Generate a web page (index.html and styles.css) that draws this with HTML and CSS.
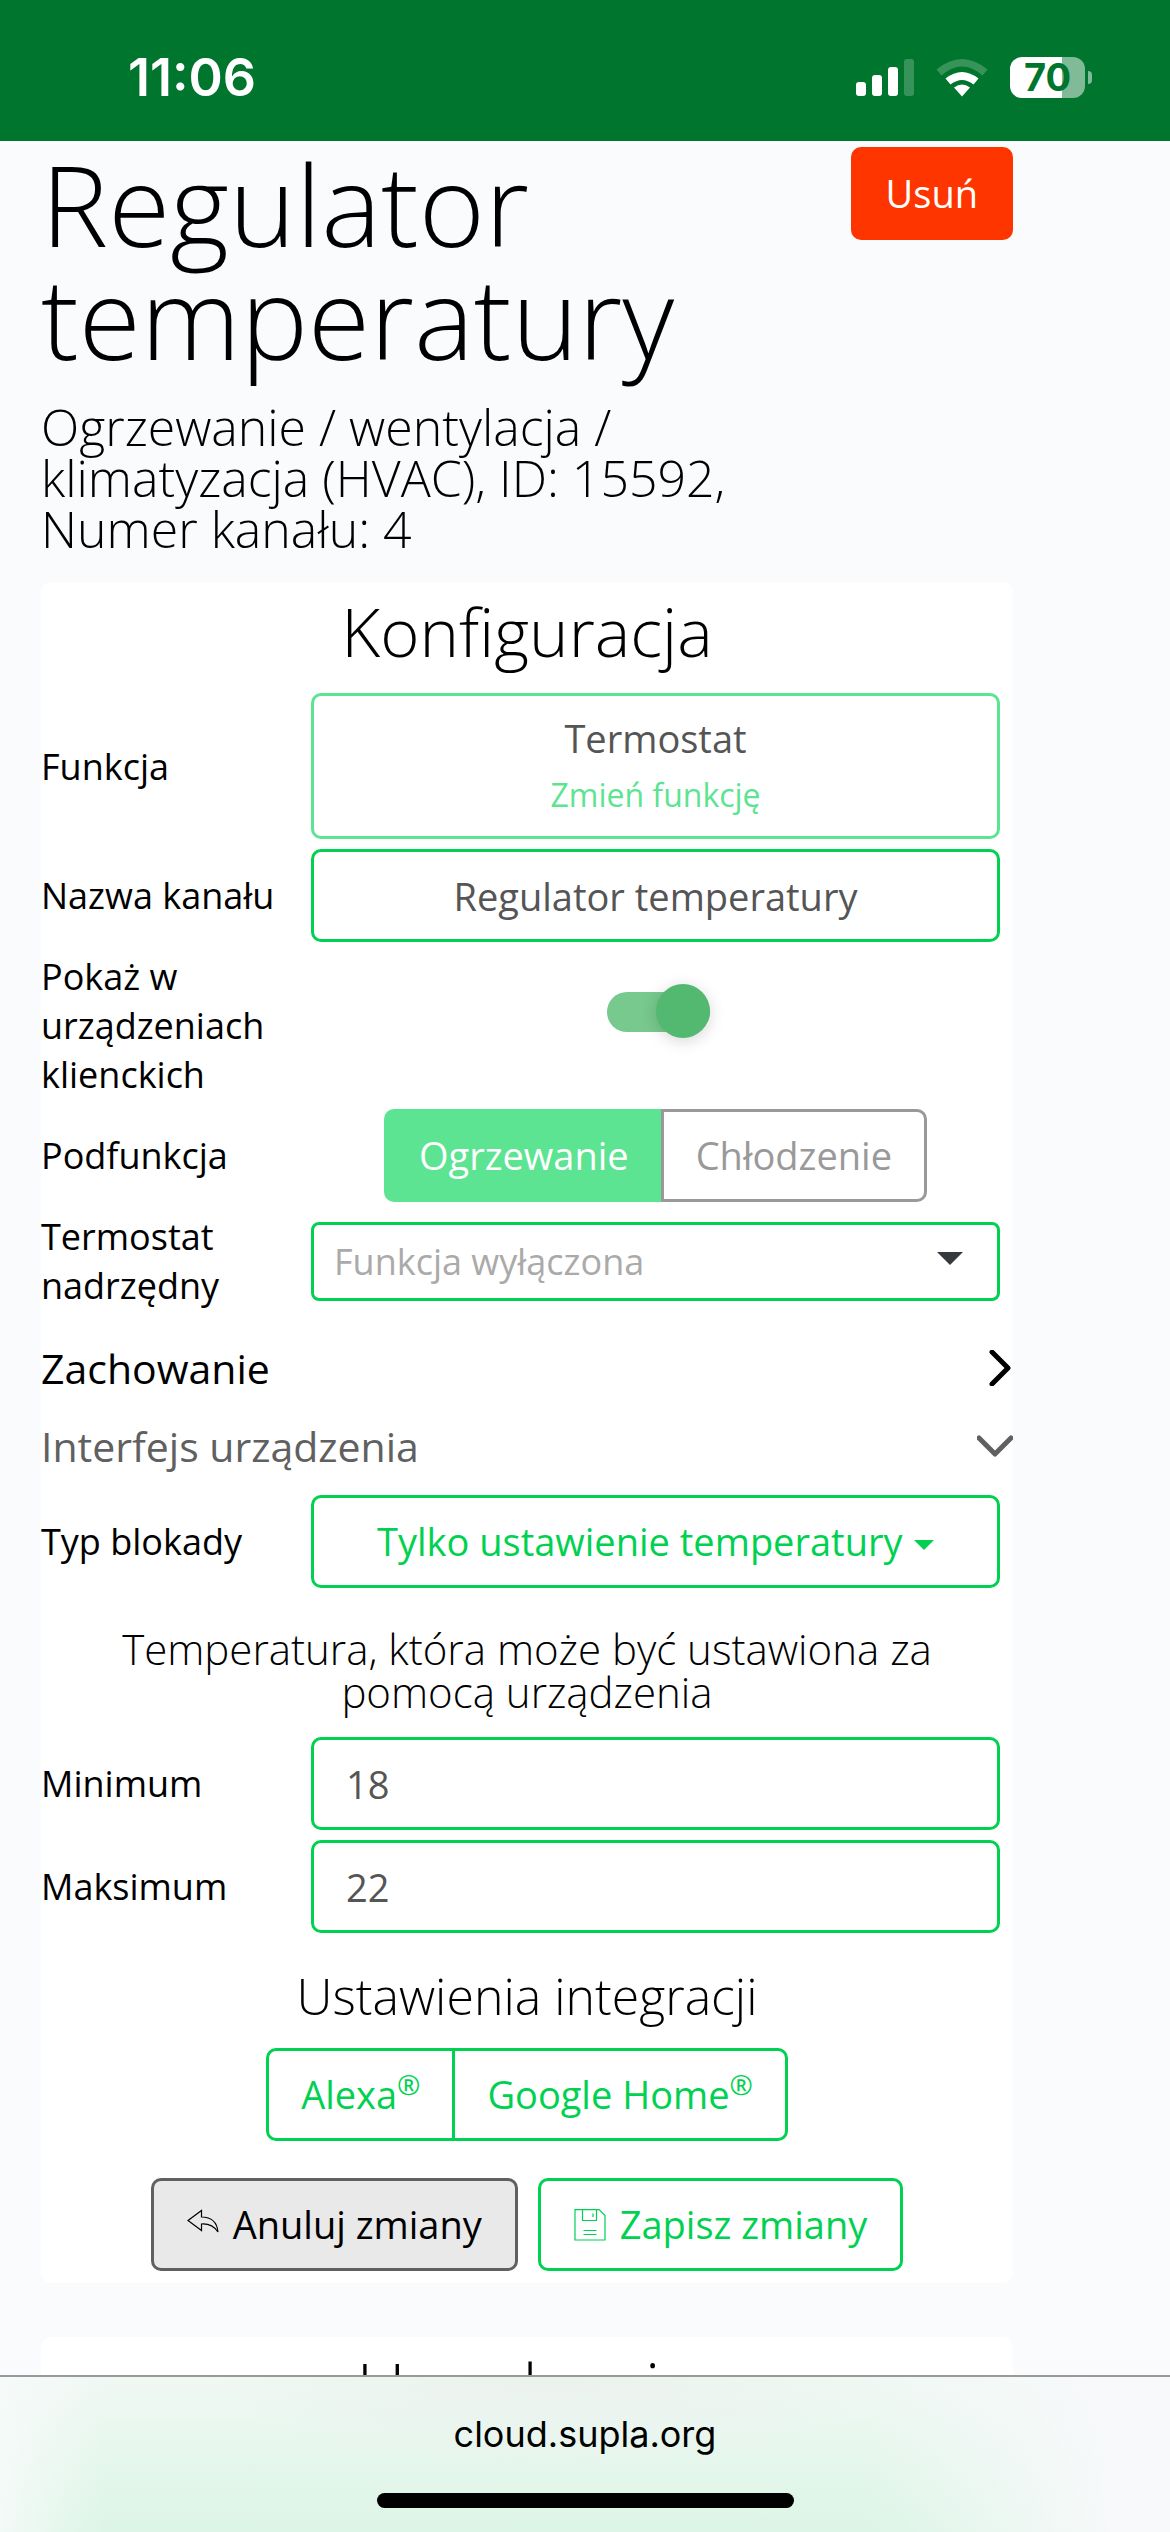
FILE: index.html
```html
<!DOCTYPE html>
<html lang="pl">
<head>
<meta charset="utf-8">
<meta name="viewport" content="width=device-width">
<title>Regulator temperatury</title>
<link rel="stylesheet" href="styles.css">
</head>
<body>
<div class="status-bar">
  <span class="clock">11:06</span>
  <div class="indicators">
    <svg class="signal" viewBox="0 0 58 38" aria-hidden="true">
      <rect x="0" y="23" width="10" height="14" rx="3" fill="#fff"/>
      <rect x="16" y="16" width="10" height="21" rx="3" fill="#fff"/>
      <rect x="32" y="8" width="10" height="29" rx="3" fill="#fff"/>
      <rect x="48" y="0" width="10" height="37" rx="3" fill="#fff" fill-opacity=".22"/>
    </svg>
    <svg class="wifi" viewBox="0 0 52 38" aria-hidden="true">
      <path d="M0.500 10.500Q26 -10.500 51.500 10.500L46.500 16.500Q26 -1.500 5.500 16.500Z" fill="#fff" fill-opacity=".22"/>
      <path d="M9.500 19.500Q26 6.500 42.500 19.500L37.500 25.500Q26 16.500 14.500 25.500Z" fill="#fff"/>
      <path d="M18 28.500Q26 22.500 34 28.500L26 37.500Z" fill="#fff"/>
    </svg>
    <div class="battery"><span class="battery-level">70</span><i class="battery-tip"></i></div>
  </div>
</div>

<main class="page">
  <header class="page-header">
    <div>
      <h1>Regulator<br>temperatury</h1>
      <p class="subtitle">Ogrzewanie / wentylacja /<br>klimatyzacja (HVAC), ID: 15592,<br>Numer kanału: 4</p>
    </div>
    <button class="btn btn-danger" type="button">Usuń</button>
  </header>

  <form class="card">
    <h2>Konfiguracja</h2>
    <div class="rows">
      <div class="row">
        <label for="function">Funkcja</label>
        <button id="function" class="function-btn" type="button">
          <span class="function-name">Termostat</span>
          <span class="function-change">Zmień funkcję</span>
        </button>
      </div>
      <div class="row">
        <label for="name">Nazwa kanału</label>
        <input id="name" class="control centered" type="text" value="Regulator temperatury">
      </div>
      <div class="row">
        <label for="visible">Pokaż w urządzeniach klienckich</label>
        <input id="visible" class="toggle" type="checkbox" role="switch" checked>
      </div>
      <div class="row">
        <span class="row-label" id="subfunction">Podfunkcja</span>
        <div class="btn-group" role="group" aria-labelledby="subfunction">
          <button class="btn btn-active" type="button">Ogrzewanie</button>
          <button class="btn btn-muted" type="button">Chłodzenie</button>
        </div>
      </div>
      <div class="row">
        <label for="master">Termostat nadrzędny</label>
        <div class="picker">
          <select id="master"><option>Funkcja wyłączona</option></select>
          <svg class="picker-arrow" viewBox="0 0 26 13" aria-hidden="true"><path d="M0 0H26L13 13Z" fill="#343a40"/></svg>
        </div>
      </div>
    </div>

    <div class="sections">
      <button class="section" type="button">Zachowanie
        <svg class="chevron" viewBox="0 0 36 36" aria-hidden="true"><path d="M15 2L31 18L15 34" fill="none" stroke="#000" stroke-width="5" stroke-linecap="round" stroke-linejoin="round"/></svg>
      </button>
      <button class="section section-open" type="button">Interfejs urządzenia
        <svg class="chevron" viewBox="0 0 36 36" aria-hidden="true"><path d="M2 10L18 26L34 10" fill="none" stroke="#606060" stroke-width="5" stroke-linecap="round" stroke-linejoin="round"/></svg>
      </button>
    </div>

    <div class="rows">
      <div class="row">
        <label for="lock">Typ blokady</label>
        <div class="control dropdown">
          <select id="lock"><option>Tylko ustawienie temperatury</option></select>
          <svg class="caret" viewBox="0 0 20 10" aria-hidden="true"><path d="M0 0H20L10 10Z" fill="#00d151"/></svg>
        </div>
      </div>
    </div>

    <h4>Temperatura, która może być ustawiona za pomocą urządzenia</h4>
    <div class="rows">
      <div class="row">
        <label for="min">Minimum</label>
        <input id="min" class="control" type="text" inputmode="numeric" value="18">
      </div>
      <div class="row">
        <label for="max">Maksimum</label>
        <input id="max" class="control" type="text" inputmode="numeric" value="22">
      </div>
    </div>

    <h3>Ustawienia integracji</h3>
    <div class="btn-group">
      <button class="btn btn-outline" type="button"><span>Alexa<sup>®</sup></span></button>
      <button class="btn btn-outline" type="button"><span>Google Home<sup>®</sup></span></button>
    </div>

    <div class="actions">
      <button class="btn btn-cancel" type="button">
        <svg class="icon" viewBox="0 0 32 32" aria-hidden="true"><path d="M1 11.500L14.500 1.500V8C24 8 30 13 31 23C27 17 22 14.500 14.500 15V21.500Z" fill="none" stroke="#000" stroke-width="1.200"/></svg>
        Anuluj zmiany
      </button>
      <button class="btn btn-outline" type="submit">
        <svg class="icon" viewBox="0 0 32 32" aria-hidden="true"><path d="M1 .6H25L31 6.600V31H1ZM8.500 .6V11.500H22.500V.6M19 4.500V8M9.500 21.500H22.500M9.500 25.500H22.500" fill="none" stroke="#00d151" stroke-width="1.200"/></svg>
        Zapisz zmiany
      </button>
    </div>
  </form>

  <section class="card">
    <h2>Urządzenie</h2>
  </section>
</main>

<footer class="browser-bar">
  <span>cloud.supla.org</span>
  <i class="home-indicator"></i>
</footer>
</body>
</html>
```
FILE: styles.css
```css
* { box-sizing: border-box; }

body {
  margin: 0;
  height: 100vh;
  display: flex;
  flex-direction: column;
  overflow: hidden;
  background: #fafbfd;
  color: #000;
  font-family: "Open Sans", sans-serif;
  font-size: 36px;
  line-height: 49px;
}

button, input, select { font: inherit; color: inherit; margin: 0; }

h1, h2, h3, h4, .subtitle {
  margin: 0;
  font-family: "Open Sans", sans-serif;
  font-weight: 300;
}

/* status bar */
.status-bar {
  flex: none;
  display: flex;
  justify-content: space-between;
  align-items: center;
  height: 141px;
  padding: 14px 78px 0 128px;
  background: #00752e;
  color: #fff;
}
.clock { font: 600 52px/60px Inter, sans-serif; }
.indicators { display: flex; align-items: center; gap: 22px; }
.signal { width: 58px; height: 38px; }
.wifi { width: 52px; height: 38px; }
.battery { display: flex; align-items: center; gap: 3px; }
.battery-level {
  width: 75px;
  height: 41px;
  border-radius: 12px;
  background: linear-gradient(90deg, #fff 70%, #80ba96 70%);
  color: #00752e;
  font: 700 38px/41px Inter, sans-serif;
  text-align: center;
}
.battery-tip { width: 4px; height: 13px; border-radius: 0 6px 6px 0; background: #80ba96; }

/* page */
.page {
  flex: 1;
  min-height: 0;
  overflow: hidden;
  padding: 6px 157px 0 41px;
}
.page-header { display: flex; justify-content: space-between; align-items: flex-start; margin-bottom: 27px; }
h1 { font-size: 113px; line-height: 113px; }
.subtitle { margin-top: 29px; font-size: 50px; line-height: 51px; }

.card {
  margin-bottom: 54px;
  padding: 18px 0 12px;
  border-radius: 10px;
  background: #fff;
}
h2 { margin-bottom: 31px; font-size: 67px; line-height: 62px; text-align: center; }
h3 { margin: 38px 0 26px; font-size: 50px; line-height: 51px; text-align: center; }
h4 { margin: 39px 40px 24px; font-size: 42px; line-height: 43px; text-align: center; }

.rows { display: grid; gap: 10px; padding-right: 13px; }
.row { display: grid; grid-template-columns: 240px 1fr; column-gap: 30px; align-items: center; }

/* controls */
.control, .btn {
  height: 93px;
  padding: 0 32px;
  border: 3px solid #00d151;
  border-radius: 10px;
  background: #fff;
  font-size: 38px;
}
.control { width: 100%; color: #555; }
.centered { text-align: center; }
.function-btn {
  display: flex;
  flex-direction: column;
  align-items: center;
  justify-content: center;
  gap: 7px;
  height: 146px;
  border: 3px solid #5ce492;
  border-radius: 10px;
  background: #fff;
}
.function-name { font-size: 38px; color: #555; }
.function-change { font-size: 32px; color: #5ce492; }

.toggle {
  position: relative;
  align-self: start;
  justify-self: center;
  width: 103px;
  height: 40px;
  margin: 40px 0 0 6px;
  border-radius: 20px;
  background: #77c98e;
  appearance: none;
}
.toggle::before {
  content: "";
  position: absolute;
  top: -8px;
  right: 0;
  width: 54px;
  height: 54px;
  border-radius: 50%;
  background: #53b970;
  box-shadow: 0 3px 16px rgba(0, 0, 0, .16);
}

.btn { display: flex; align-items: center; justify-content: center; gap: 14px; color: #00d151; white-space: nowrap; }
.btn-danger { border-color: #ff3500; background: #ff3500; color: #fff; }
.btn-active { border-color: #5ce492; background: #5ce492; color: #fff; }
.btn-muted { border-color: #999; color: #999; }
.btn-cancel { border-color: #606060; background: #e9e9e9; color: #000; }
.btn-group { display: flex; justify-content: center; }
.btn-group .btn:first-child { border-radius: 10px 0 0 10px; }
.btn-group .btn:last-child { border-radius: 0 10px 10px 0; margin-left: -3px; }
sup { font-size: 28px; line-height: 0; }
.icon { width: 32px; height: 32px; }

select { padding: 0; border: 0; background: none; appearance: none; }
.picker {
  display: flex;
  align-items: center;
  height: 79px;
  padding: 0 34px 0 20px;
  border: 3px solid #00d151;
  border-radius: 8px;
}
.picker select { flex: 1; font-size: 36px; color: #aaa; }
.picker-arrow { width: 26px; height: 13px; margin-bottom: 6px; }
.dropdown { display: flex; align-items: center; justify-content: center; gap: 11px; }
.dropdown select { color: #00d151; }
.caret { width: 20px; height: 10px; margin-top: 6px; }

.sections { margin: 19px 0 10px; }
.section {
  display: flex;
  justify-content: space-between;
  align-items: center;
  width: 100%;
  height: 78px;
  padding: 0;
  border: 0;
  background: none;
  font-size: 41px;
}
.section-open { color: #606060; }
.chevron { width: 36px; height: 36px; }

.actions { display: flex; justify-content: center; gap: 20px; margin-top: 37px; }
.actions .btn { padding: 0 33px; }

/* browser bar */
.browser-bar {
  flex: none;
  display: flex;
  flex-direction: column;
  align-items: center;
  justify-content: space-between;
  height: 157px;
  padding: 35px 0 24px;
  border-top: 2px solid #999;
  background:
    linear-gradient(90deg, rgba(248, 251, 251, .8), rgba(248, 251, 251, 0) 9%, rgba(248, 249, 251, 0) 74%, #f8f9fb 96%),
    radial-gradient(ellipse 340px 90px at 47% 0, #ebf2ee, rgba(235, 242, 238, 0)),
    linear-gradient(#f0f8f4, #dcf5e6);
  font: 36px/44px Inter, sans-serif;
}
.home-indicator { width: 417px; height: 15px; border-radius: 8px; background: #000; }
```
